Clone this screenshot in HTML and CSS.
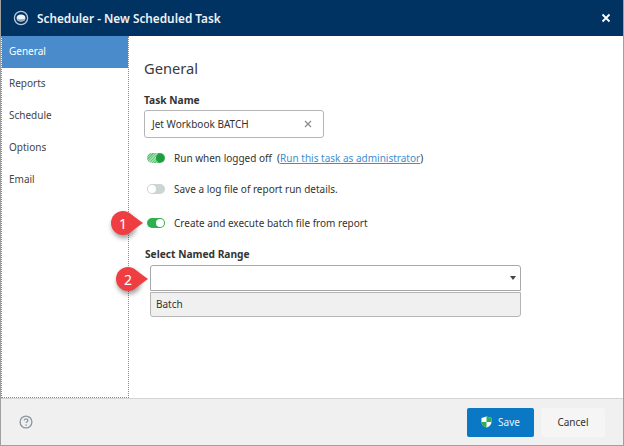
FILE: index.html
```html
<!DOCTYPE html>
<html lang="en">
<head>
  <meta charset="UTF-8" />
  <title>Scheduler - New Scheduled Task</title>
  <link rel="stylesheet" href="styles.css">
</head>
<body>

<div class="dialog">
  <header class="titlebar">
    <svg class="logo" width="16" height="16" viewBox="0 0 16 16" aria-hidden="true">
      <circle cx="8" cy="8" r="6.6" fill="none" stroke="#b9c8d8" stroke-width="1.3"/>
      <ellipse cx="8" cy="8" rx="4.4" ry="3.6" fill="#eef3f8"/>
      <path d="M3.6 8.2c1.4 1.3 7.4 1.3 8.8 0-.5 2-2.400 3.200-4.400 3.200S4.100 10.200 3.600 8.200z" fill="#8fa9c4"/>
    </svg>
    <h1>Scheduler - New Scheduled Task</h1>
    <svg class="close" width="10" height="10" viewBox="0 0 10 10" aria-hidden="true">
      <path d="M1.500 1.500l7 7M8.500 1.500l-7 7" stroke="#fff" stroke-width="1.800"/>
    </svg>
  </header>

  <div class="body">
    <nav class="sidebar">
      <a class="nav-item active">General</a>
      <a class="nav-item">Reports</a>
      <a class="nav-item">Schedule</a>
      <a class="nav-item">Options</a>
      <a class="nav-item">Email</a>
    </nav>

    <main class="content">
      <h2>General</h2>

      <label class="field-label">Task Name</label>
      <div class="textbox">
        <span>Jet Workbook BATCH</span>
        <svg width="8" height="8" viewBox="0 0 8 8" aria-hidden="true">
          <path d="M1 1l6 6M7 1L1 7" stroke="#8a8a8a" stroke-width="1.200"/>
        </svg>
      </div>

      <div class="toggle-row first">
        <span class="toggle on busy"></span>
        <span>Run when logged off&nbsp; (<a class="link">Run this task as administrator</a>)</span>
      </div>
      <div class="toggle-row second">
        <span class="toggle"></span>
        <span>Save a log file of report run details.</span>
      </div>
      <div class="toggle-row third">
        <span class="toggle on"></span>
        <span>Create and execute batch file from report</span>
      </div>

      <label class="field-label range-label">Select Named Range</label>
      <div class="combo">
        <div class="combo-input"><span class="caret"></span></div>
        <div class="combo-option">Batch</div>
      </div>
    </main>
  </div>

  <footer class="footer">
    <svg class="help" width="14" height="14" viewBox="0 0 14 14" aria-hidden="true">
      <circle cx="7" cy="7" r="5.900" fill="none" stroke="#8b95a0" stroke-width="1.300"/>
      <path d="M5.200 5.600c0-2.300 3.700-2.300 3.700-.2 0 1.300-1.800 1.300-1.800 2.700" fill="none" stroke="#8b95a0" stroke-width="1.300"/>
      <circle cx="7.100" cy="10" r=".8" fill="#8b95a0"/>
    </svg>
    <button class="btn primary">
      <svg width="11" height="12" viewBox="0 0 11 12" aria-hidden="true">
        <path d="M5.500 .5L10.500 2v4c0 2.700-2.200 4.600-5 5.500C2.700 10.600.5 8.700.5 6V2z" fill="#fff"/>
        <path d="M5.500 .5L10.500 2v4h-5zM5.500 6v5.500C2.700 10.600.5 8.700.5 6z" fill="#2fae4e"/>
      </svg>
      Save
    </button>
    <button class="btn">Cancel</button>
  </footer>

  <div class="callout one"><span>1</span></div>
  <div class="callout two"><span>2</span></div>
</div>

</body>
</html>
```

FILE: styles.css
```css
* {
  box-sizing: border-box;
}

body {
  margin: 0;
  font-family: 'Noto Sans', 'Open Sans', sans-serif;
  font-size: 10px;
  color: #333;
}

.dialog {
  position: relative;
  width: 624px;
  height: 446px;
  display: flex;
  flex-direction: column;
  background: #fff;
  border: 1px solid #a0a0a0;
  border-top: none;
  overflow: hidden;
}

.titlebar {
  height: 36px;
  margin: 0 -1px;
  padding: 0 13px;
  display: flex;
  align-items: center;
  background: #003361;
  color: #eef2f6;
}

.titlebar h1 {
  margin: 0 0 0 8px;
  font-size: 11.800px;
  font-weight: 600;
  flex: 1;
}

.body {
  flex: 1;
  display: flex;
  min-height: 0;
}

.sidebar {
  width: 128px;
  border-right: 1px dotted #8a8a8a;
  border-bottom: 1px dotted #8a8a8a;
  border-left: 1px dotted #8a8a8a;
}

.nav-item {
  display: block;
  height: 32px;
  padding: 8px 7px 0;
  color: #444;
}

.nav-item.active {
  background: #4a8ccb;
  color: #fff;
}

.content {
  flex: 1;
  padding: 20px 15px 0;
}

h2 {
  margin: 0 0 13px;
  font-size: 14.700px;
  font-weight: 400;
  line-height: 24px;
  color: #3a3a3a;
}

.field-label {
  display: block;
  font-weight: 700;
  font-size: 10.200px;
  line-height: 14px;
  color: #333;
}

.textbox {
  width: 180px;
  height: 28px;
  margin-top: 3px;
  padding: 0 11px 0 7px;
  display: flex;
  align-items: center;
  justify-content: space-between;
  border: 1px solid #b5b5b5;
  border-radius: 3px;
}

.toggle-row {
  display: flex;
  align-items: center;
  gap: 9px;
  height: 16px;
  margin-left: 3px;
}

.toggle-row.first {
  margin-top: 12px;
}

.toggle-row.second {
  margin-top: 15px;
}

.toggle-row.third {
  margin-top: 18px;
}

.toggle {
  position: relative;
  width: 18px;
  height: 10px;
  border-radius: 5px;
  background: #cdd5d2;
}

.toggle::after {
  content: "";
  position: absolute;
  top: 1px;
  left: 1px;
  width: 8px;
  height: 8px;
  border-radius: 50%;
  background: #fff;
}

.toggle.on {
  background: #2fb04f;
}

.toggle.on::after {
  left: 9px;
}

.toggle.busy {
  background: #2fb04f repeating-linear-gradient(135deg, #63c47c 0 1px, #a5dcb3 1px 2px) no-repeat left / 11px 100%;
}

.toggle.busy::after {
  background: #1f9c40;
}

.link {
  color: #3f8ed0;
  text-decoration: underline;
}

.range-label {
  margin: 16px 0 0 1px;
}

.combo {
  width: 371px;
  margin: 4px 0 0 6px;
}

.combo-input {
  position: relative;
  height: 26px;
  border: 1px solid #a8a8a8;
  border-radius: 3px 3px 0 0;
}

.caret {
  position: absolute;
  top: 10px;
  right: 4px;
  width: 0;
  height: 0;
  border-left: 3.500px solid transparent;
  border-right: 3.500px solid transparent;
  border-top: 4px solid #444;
}

.combo-option {
  height: 25px;
  margin-top: 1px;
  padding: 4px 5px 0;
  background: #f0f0f0;
  border: 1px solid #b5b5b5;
  border-radius: 0 0 3px 3px;
}

.footer {
  height: 47px;
  padding: 0 18px;
  display: flex;
  align-items: center;
  gap: 7px;
  background: #f0f0f0;
  border-top: 1px solid #d4d4d4;
}

.help {
  margin-right: auto;
}

.btn {
  width: 64px;
  height: 29px;
  padding: 0;
  border: none;
  border-radius: 2px;
  background: #f5f5f5;
  color: #333;
  font: inherit;
}

.btn.primary {
  width: 67px;
  display: flex;
  align-items: center;
  justify-content: center;
  gap: 6px;
  background: #0a78c4;
  color: #e8f2fa;
}

.callout {
  position: absolute;
  width: 24px;
  height: 24px;
  border-radius: 50%;
  background: #ef3e42;
  color: #fff;
  font-size: 14px;
  display: flex;
  align-items: center;
  justify-content: center;
  box-shadow: 1px 3px 5px rgba(0, 0, 0, 0.4);
}

.callout::after {
  content: "";
  position: absolute;
  top: 4px;
  right: -8px;
  border-top: 8px solid transparent;
  border-bottom: 8px solid transparent;
  border-left: 11px solid #ef3e42;
}

.callout span {
  position: relative;
  z-index: 1;
}

.callout.one {
  left: 110px;
  top: 211px;
}

.callout.two {
  left: 115px;
  top: 267px;
}
```
